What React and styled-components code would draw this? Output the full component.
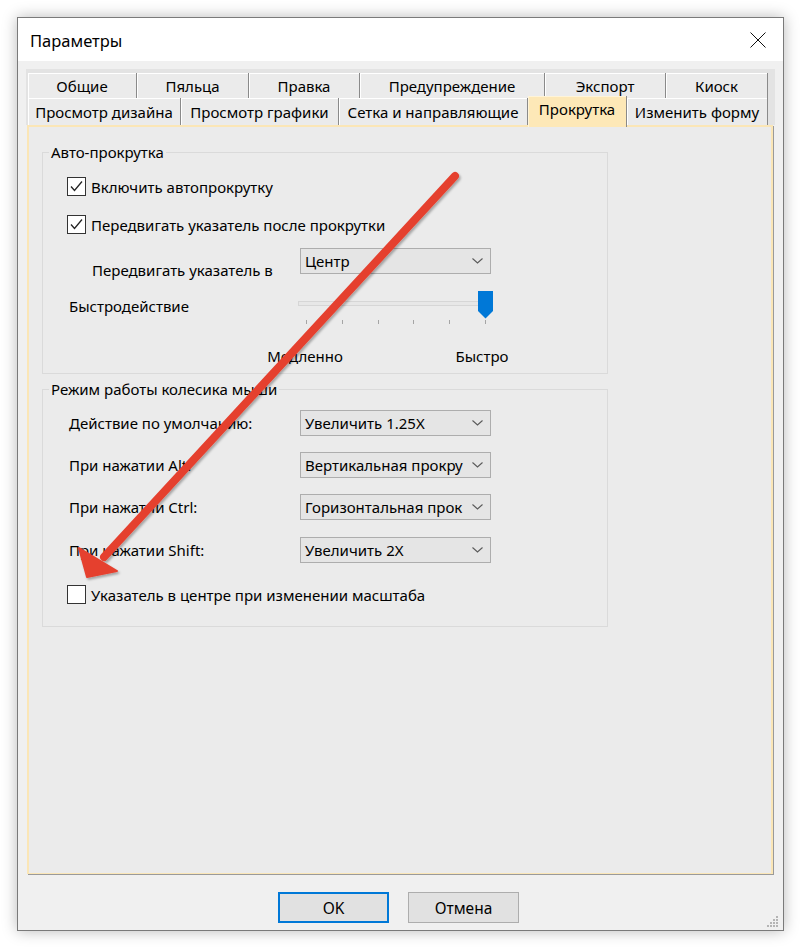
import React from 'react';
import styled, { createGlobalStyle } from 'styled-components';

const GlobalStyle = createGlobalStyle`
  html, body {
    margin: 0;
    padding: 0;
    background: #ffffff;
  }
  body {
    font-family: "Noto Sans", "Open Sans", sans-serif;
    font-size: 15px;
    color: #000;
  }
`;

const Page = styled.div`
  position: relative;
  width: 805px;
  height: 951px;
  padding: 17px 0 0 17px;
  box-sizing: border-box;
`;

const Window = styled.div`
  position: relative;
  width: 767px;
  height: 914px;
  box-sizing: border-box;
  border: 1px solid #7a7a7a;
  background: #f0f0f0;
  box-shadow: 0 0 14px rgba(0, 0, 0, 0.28);
  display: flex;
  flex-direction: column;
`;

const TitleBar = styled.div`
  height: 43px;
  background: #fff;
  display: flex;
  align-items: center;
  justify-content: space-between;
  padding: 0 17px 0 12px;
`;

const Title = styled.div`
  font-size: 16.5px;
  margin-top: 1px;
`;

const Body = styled.div`
  flex: 1;
  display: flex;
  flex-direction: column;
  padding: 8px 8px 7px 8px;
`;

const TabStrip = styled.div`
  background: #e3e3e3;
  padding: 4px 7px 0 2px;
`;

const TabRow = styled.div`
  display: flex;
  height: ${p => p.h}px;
  align-items: stretch;
`;

const Tab = styled.div`
  width: ${p => p.w}px;
  box-sizing: border-box;
  display: flex;
  align-items: center;
  justify-content: center;
  background: ${p => (p.active ? '#fde8b7' : '#ebebeb')};
  border-right: 1px solid #8a8a8a;
  box-shadow: inset 1px 1px 0 #ffffff;
  white-space: nowrap;
  font-size: 15px;
  ${p => p.active && `
    position: relative;
    z-index: 1;
    align-self: flex-end;
    height: 31px;
    margin-bottom: -2px;
    padding-bottom: 5px;
    box-shadow: inset 1px 1px 0 #fff4d8;
  `}
`;

const Panel = styled.div`
  flex: 1;
  margin: 0 2px 0 1px;
  background: #ebebeb;
  border: 2px solid #fbe6b6;
  border-bottom-width: 1px;
  box-shadow: 1px 1px 0 #9a9a9a;
  padding: 14px 0 0 13px;
`;

const Group = styled.fieldset`
  width: 566px;
  box-sizing: border-box;
  margin: ${p => p.mt || 0}px 0 0 0;
  padding: 0 0 ${p => p.pb}px 0;
  border: 1px solid #dadada;
  min-width: 0;
`;

const Legend = styled.legend`
  margin-left: 6px;
  padding: 0 2px;
  font-size: 15px;
  line-height: 22px;
`;

const CheckRow = styled.label`
  display: flex;
  align-items: center;
  height: 19px;
  margin-top: ${p => p.mt}px;
  padding-left: 24px;
  gap: 5px;
`;

const Box = styled.span`
  width: 19px;
  height: 19px;
  box-sizing: border-box;
  border: 1px solid #333;
  background: #fff;
  display: flex;
  align-items: center;
  justify-content: center;
`;

const FieldRow = styled.div`
  display: grid;
  grid-template-columns: 257px 191px;
  align-items: ${p => p.align || 'center'};
  margin-top: ${p => p.mt}px;
`;

const FieldLabel = styled.div`
  padding-left: ${p => p.indent || 26}px;
  padding-top: ${p => p.pt || 0}px;
  line-height: 22px;
  white-space: nowrap;
`;

const Select = styled.div`
  height: 26px;
  box-sizing: border-box;
  border: 1px solid #adadad;
  background: #e5e5e5;
  display: flex;
  align-items: center;
  justify-content: space-between;
  padding: 0 7px 0 4px;
  white-space: nowrap;
`;

const Slider = styled.div`
  position: relative;
  width: 195px;
  height: 33px;
  margin-left: -2px;
`;

const Track = styled.div`
  position: absolute;
  left: 0;
  right: 0;
  top: 10px;
  height: 5px;
  box-sizing: border-box;
  background: #e7e7e7;
  border: 1px solid #d6d6d6;
`;

const Thumb = styled.svg`
  position: absolute;
  left: 180px;
  top: 0;
`;

const Tick = styled.div`
  position: absolute;
  top: 29px;
  width: 1px;
  height: 4px;
  background: #a5a5a5;
`;

const ScaleRow = styled.div`
  display: flex;
  margin-top: ${p => p.mt}px;
  padding-left: 212px;
  gap: 77px;
  line-height: 22px;
`;

const ScaleLabel = styled.div`
  width: 100px;
  text-align: center;
`;

const ButtonBar = styled.div`
  display: flex;
  justify-content: center;
  gap: 19px;
  margin-top: 18px;
  padding-right: 4px;
`;

const Button = styled.div`
  width: 111px;
  height: 31px;
  box-sizing: border-box;
  background: #e1e1e1;
  border: ${p => (p.primary ? '2px solid #0078d7' : '1px solid #adadad')};
  display: flex;
  align-items: center;
  justify-content: center;
  font-size: 15.5px;
`;

const Grip = styled.svg`
  position: absolute;
  right: 4px;
  bottom: 2px;
`;

const ArrowLayer = styled.svg`
  position: absolute;
  left: 0;
  top: 0;
  pointer-events: none;
`;

const Chevron = () => (
  <svg width="11" height="6" viewBox="0 0 11 6">
    <polyline points="0.5,0.5 5.5,5 10.5,0.5" fill="none" stroke="#5a5a5a" strokeWidth="1.1" />
  </svg>
);

const CheckBox = ({ checked }) => (
  <Box>
    {checked && (
      <svg width="15" height="15" viewBox="0 0 15 15">
        <polyline points="2,7.5 5.5,11.5 13,2.5" fill="none" stroke="#222" strokeWidth="1.3" />
      </svg>
    )}
  </Box>
);

const Dropdown = ({ value }) => (
  <Select>
    <span>{value}</span>
    <Chevron />
  </Select>
);

const row1 = [
  ['Общие', 109],
  ['Пяльца', 112],
  ['Правка', 111],
  ['Предупреждение', 185],
  ['Экспорт', 121],
  ['Киоск', 102],
];

const row2 = [
  ['Просмотр дизайна', 153],
  ['Просмотр графики', 158],
  ['Сетка и направляющие', 189],
  ['Прокрутка', 99, true],
  ['Изменить форму', 141],
];

const wheelRows = [
  ['Действие по умолчанию:', 'Увеличить 1.25X', 10],
  ['При нажатии Alt:', 'Вертикальная прокру', 16],
  ['При нажатии Ctrl:', 'Горизонтальная прок', 16],
  ['При нажатии Shift:', 'Увеличить 2X', 17],
];

const ticks = [8, 44, 80, 115, 151, 187];

const App = () => {
  return (
    <Page>
      <GlobalStyle />
      <Window>
        <TitleBar>
          <Title>Параметры</Title>
          <svg width="16" height="16" viewBox="0 0 16 16">
            <path d="M0.5 0.5 L15.5 15.5 M15.5 0.5 L0.5 15.5" stroke="#111" strokeWidth="1" />
          </svg>
        </TitleBar>
        <Body>
          <TabStrip>
            <TabRow h={25}>
              {row1.map(([t, w]) => (
                <Tab key={t} w={w}>{t}</Tab>
              ))}
            </TabRow>
            <TabRow h={27}>
              {row2.map(([t, w, a]) => (
                <Tab key={t} w={w} active={a}>{t}</Tab>
              ))}
            </TabRow>
          </TabStrip>
          <Panel>
            <Group pb={6}>
              <Legend>Авто-прокрутка</Legend>
              <CheckRow mt={14}>
                <CheckBox checked />
                <span>Включить автопрокрутку</span>
              </CheckRow>
              <CheckRow mt={19}>
                <CheckBox checked />
                <span>Передвигать указатель после прокрутки</span>
              </CheckRow>
              <FieldRow mt={14} align="start">
                <FieldLabel indent={49} pt={11}>Передвигать указатель в</FieldLabel>
                <Dropdown value="Центр" />
              </FieldRow>
              <FieldRow mt={10} align="start">
                <FieldLabel pt={4}>Быстродействие</FieldLabel>
                <Slider>
                  <Track />
                  {ticks.map(x => (
                    <Tick key={x} style={{ left: x }} />
                  ))}
                  <Thumb width="15" height="28" viewBox="0 0 15 28">
                    <path d="M0 0 H15 V20 L7.5 27.5 L0 20 Z" fill="#0078d7" />
                  </Thumb>
                </Slider>
              </FieldRow>
              <ScaleRow mt={21}>
                <ScaleLabel>Медленно</ScaleLabel>
                <ScaleLabel>Быстро</ScaleLabel>
              </ScaleRow>
            </Group>
            <Group mt={4} pb={22}>
              <Legend>Режим работы колесика мыши</Legend>
              {wheelRows.map(([label, value, mt]) => (
                <FieldRow key={label} mt={mt}>
                  <FieldLabel>{label}</FieldLabel>
                  <Dropdown value={value} />
                </FieldRow>
              ))}
              <CheckRow mt={22}>
                <CheckBox />
                <span>Указатель в центре при изменении масштаба</span>
              </CheckRow>
            </Group>
          </Panel>
          <ButtonBar>
            <Button primary>OK</Button>
            <Button>Отмена</Button>
          </ButtonBar>
        </Body>
        <Grip width="12" height="12" viewBox="0 0 12 12">
          <rect x="9" y="0" width="2" height="2" fill="#b4b4b4" />
          <rect x="6" y="3" width="2" height="2" fill="#b4b4b4" />
          <rect x="9" y="3" width="2" height="2" fill="#b4b4b4" />
          <rect x="3" y="6" width="2" height="2" fill="#b4b4b4" />
          <rect x="6" y="6" width="2" height="2" fill="#b4b4b4" />
          <rect x="9" y="6" width="2" height="2" fill="#b4b4b4" />
          <rect x="0" y="9" width="2" height="2" fill="#b4b4b4" />
          <rect x="3" y="9" width="2" height="2" fill="#b4b4b4" />
          <rect x="6" y="9" width="2" height="2" fill="#b4b4b4" />
          <rect x="9" y="9" width="2" height="2" fill="#b4b4b4" />
        </Grip>
      </Window>
      <ArrowLayer width="805" height="951" viewBox="0 0 805 951">
        <defs>
          <filter id="arrowShadow" x="-10%" y="-10%" width="120%" height="120%">
            <feDropShadow dx="1.5" dy="2" stdDeviation="1.2" floodColor="#000" floodOpacity="0.3" />
          </filter>
        </defs>
        <g filter="url(#arrowShadow)" fill="#e5402f" stroke="#e5402f">
          <line x1="455" y1="176" x2="104" y2="557" strokeWidth="8" strokeLinecap="round" />
          <polygon points="87,577 79,548 117,571" strokeWidth="2" strokeLinejoin="round" />
        </g>
      </ArrowLayer>
    </Page>
  );
};

export default App;
